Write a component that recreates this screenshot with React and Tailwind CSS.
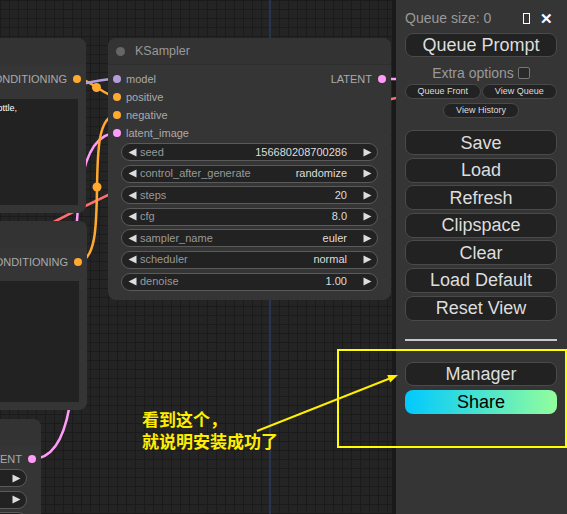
import React from "react";

function Tri({ left }) {
  return (
    <svg width="9" height="9" viewBox="0 0 9 9" className="shrink-0">
      {left ? (
        <polygon points="8.5,0.5 8.5,8.5 0.5,4.5" fill="#dddddd" />
      ) : (
        <polygon points="0.5,0.5 0.5,8.5 8.5,4.5" fill="#dddddd" />
      )}
    </svg>
  );
}

function Widget({ label, value }) {
  return (
    <div className="flex h-[18px] items-center rounded-full border border-[#5a5a5a] bg-[#222222] pl-[6px] pr-[5px] text-[11px] leading-none">
      <Tri left />
      <span className="ml-[3px] text-[#999999]">{label}</span>
      <span className="ml-auto mr-[16px] text-[#dddddd]">{value}</span>
      <Tri />
    </div>
  );
}

function InSlot({ color, label }) {
  return (
    <div className="flex h-[18px] items-center pl-[5px]">
      <span className={`h-[8px] w-[8px] rounded-full ${color}`} />
      <span className="ml-[5px] text-[11px] leading-none text-[#aaaaaa]">{label}</span>
    </div>
  );
}

function OutSlot({ color, label }) {
  return (
    <div className="flex h-[18px] items-center justify-end pr-[5px]">
      <span className="mr-[6px] text-[11px] leading-none text-[#aaaaaa]">{label}</span>
      <span className={`h-[8px] w-[8px] rounded-full ${color}`} />
    </div>
  );
}

function Btn({ children }) {
  return (
    <div className="flex h-[25px] items-center justify-center rounded-[8px] border border-[#4a4a4a] bg-[#222222] text-[18px] leading-none text-[#dddddd]">
      {children}
    </div>
  );
}

function SmallBtn({ children, className = "" }) {
  return (
    <div
      className={`flex h-[15px] items-center justify-center rounded-[8px] border border-[#4a4a4a] bg-[#222222] text-[9px] leading-none text-[#dddddd] ${className}`}
    >
      {children}
    </div>
  );
}

function Canvas() {
  return (
    <div className="relative h-[514px] w-[396px] shrink-0 overflow-hidden bg-[#242424] bg-[linear-gradient(to_right,#1b1b1b_1px,transparent_1px),linear-gradient(to_bottom,#1b1b1b_1px,transparent_1px)] bg-[length:9px_9px]">
      {/* axis line */}
      <div className="absolute bottom-0 left-[269px] top-0 w-[2px] bg-[#283552]" />
      {/* right dark strip */}
      <div className="absolute bottom-0 right-0 top-0 w-[4px] bg-[#191919]" />

      {/* links */}
      <svg className="absolute inset-0" width="396" height="514">
        <path d="M20 240 Q200 140 396 98" stroke="#ff6e6e" strokeWidth="2.5" fill="none" />
        <path d="M383 79 L396 79" stroke="#ff9cf9" strokeWidth="2.5" fill="none" />
        <path d="M32 459 C116 459, 35 133, 117 133" stroke="#ff9cf9" strokeWidth="2.5" fill="none" />
        <path d="M77 262 C115 262, 79 115, 117 115" stroke="#ffa931" strokeWidth="2.5" fill="none" />
        <circle cx="97" cy="187" r="4.5" fill="#ffa931" />
        <path d="M77 78 C88 78, 106 97, 117 97" stroke="#ffa931" strokeWidth="2.5" fill="none" />
        <circle cx="96.5" cy="87.5" r="4.5" fill="#ffa931" />
        <path d="M55 90 C80 86, 92 79, 117 79" stroke="#b39ddb" strokeWidth="2.5" fill="none" />
      </svg>

      {/* top-left CLIP node */}
      <div className="absolute left-[-120px] top-[38px] flex h-[175px] w-[206px] flex-col rounded-[8px] bg-[#353535]">
        <div className="h-[27px] shrink-0 rounded-t-[8px] bg-[#333333]" />
        <div className="pt-[5px]">
          <OutSlot color="bg-[#ffa931]" label="CONDITIONING" />
        </div>
        <div className="mb-[8px] ml-[8px] mr-[8px] mt-[11px] flex flex-1 justify-end bg-[#222222] pr-[61px] pt-[5px]">
          <span className="whitespace-nowrap text-[9px] leading-none text-white">
            beautiful scenery nature glass bottle,
          </span>
        </div>
      </div>

      {/* middle-left CLIP node */}
      <div className="absolute left-[-120px] top-[221px] flex h-[189px] w-[207px] flex-col rounded-[8px] bg-[#353535]">
        <div className="h-[27px] shrink-0 rounded-t-[8px] bg-[#333333]" />
        <div className="pt-[5px]">
          <OutSlot color="bg-[#ffa931]" label="CONDITIONING" />
        </div>
        <div className="mb-[8px] ml-[8px] mr-[8px] mt-[10px] flex-1 bg-[#222222]" />
      </div>

      {/* bottom-left latent node */}
      <div className="absolute left-[-200px] top-[419px] flex h-[140px] w-[241px] flex-col rounded-[8px] bg-[#353535]">
        <div className="h-[27px] shrink-0 rounded-t-[8px] bg-[#333333]" />
        <div className="pt-[4px]">
          <OutSlot color="bg-[#ff9cf9]" label="LATENT" />
        </div>
        <div className="ml-[13px] mr-[14px] mt-[1px] flex flex-col gap-[3.6px]">
          <Widget label="width" value="512" />
          <Widget label="height" value="512" />
          <Widget label="batch_size" value="1" />
        </div>
      </div>

      {/* KSampler node */}
      <div className="absolute left-[108px] top-[38px] flex h-[262px] w-[283px] flex-col rounded-[8px] bg-[#353535]">
        <div className="flex h-[27px] shrink-0 items-center rounded-t-[8px] border-b border-[#2e2e2e] bg-[#333333] pl-[8px] pt-[1px]">
          <span className="h-[9px] w-[9px] rounded-full bg-[#666666]" />
          <span className="ml-[10px] text-[12.5px] leading-none text-[#999999]">KSampler</span>
        </div>
        <div className="flex pt-[5px]">
          <div className="flex flex-1 flex-col">
            <InSlot color="bg-[#b39ddb]" label="model" />
            <InSlot color="bg-[#ffa931]" label="positive" />
            <InSlot color="bg-[#ffa931]" label="negative" />
            <InSlot color="bg-[#ff9cf9]" label="latent_image" />
          </div>
          <div className="flex flex-col">
            <OutSlot color="bg-[#ff9cf9]" label="LATENT" />
          </div>
        </div>
        <div className="mx-[13px] mt-[1px] flex flex-col gap-[3.6px]">
          <Widget label="seed" value="156680208700286" />
          <Widget label="control_after_generate" value="randomize" />
          <Widget label="steps" value="20" />
          <Widget label="cfg" value="8.0" />
          <Widget label="sampler_name" value="euler" />
          <Widget label="scheduler" value="normal" />
          <Widget label="denoise" value="1.00" />
        </div>
      </div>
    </div>
  );
}

function Panel() {
  return (
    <div className="flex h-[514px] w-[171px] shrink-0 flex-col bg-[#353535] pl-[9px] pr-[10px] pt-[8px]">
      <div className="flex h-[20px] items-center">
        <span className="text-[14px] leading-none text-[#999999]">Queue size: 0</span>
        <span className="ml-auto mr-[10px] h-[11px] w-[7px] border border-white" />
        <span className="mr-[4px] text-[15px] font-bold leading-none text-white">✕</span>
      </div>
      <div className="mt-[5px] flex h-[24px] items-center justify-center rounded-[8px] border border-[#4a4a4a] bg-[#222222] text-[18px] leading-none text-[#dddddd]">
        Queue Prompt
      </div>
      <div className="mt-[7px] flex h-[18px] items-center justify-center">
        <span className="text-[14px] leading-none text-[#999999]">Extra options</span>
        <span className="ml-[4px] h-[12px] w-[12px] rounded-[2px] border border-[#777777] bg-[#2a2a2a]" />
      </div>
      <div className="mt-[2px] flex gap-[1px]">
        <SmallBtn className="flex-1">Queue Front</SmallBtn>
        <SmallBtn className="flex-1">View Queue</SmallBtn>
      </div>
      <div className="mt-[4px] flex justify-center">
        <SmallBtn className="w-[76px]">View History</SmallBtn>
      </div>
      <div className="mt-[12px] flex flex-col gap-[2.6px]">
        <Btn>Save</Btn>
        <Btn>Load</Btn>
        <Btn>Refresh</Btn>
        <Btn>Clipspace</Btn>
        <Btn>Clear</Btn>
        <Btn>Load Default</Btn>
        <Btn>Reset View</Btn>
      </div>
      <div className="mt-[18px] h-[2px] bg-[#c8c8c8]" />
      <div className="mt-[21px] flex h-[24px] items-center justify-center rounded-[8px] border border-[#4a4a4a] bg-[#222222] text-[18px] leading-none text-[#dddddd]">
        Manager
      </div>
      <div className="mt-[4px] flex h-[24px] items-center justify-center rounded-[8px] bg-[linear-gradient(90deg,#00c9ff_0%,#92fe9d_100%)] text-[18px] leading-none text-black">
        Share
      </div>
    </div>
  );
}

export default function App() {
  return (
    <div className="relative flex h-[514px] w-[567px] overflow-hidden font-['Liberation_Sans',Arial,sans-serif]">
      <Canvas />
      <Panel />
      {/* annotation */}
      <div className="pointer-events-none absolute left-[337px] top-[349px] h-[99px] w-[230px] border-2 border-[#ffff00]" />
      <svg className="pointer-events-none absolute inset-0" width="567" height="514">
        <line x1="257" y1="431" x2="389" y2="378.7" stroke="#ffee00" strokeWidth="2" />
        <polygon points="398,375 390.2,382.4 387.2,375" fill="#ffee00" />
      </svg>
      <div className="pointer-events-none absolute left-[142px] top-[408px] font-['Noto_Sans_CJK_SC',sans-serif] text-[17px] font-bold leading-[22px] text-[#ffee00]">
        <div>看到这个，</div>
        <div>就说明安装成功了</div>
      </div>
    </div>
  );
}
